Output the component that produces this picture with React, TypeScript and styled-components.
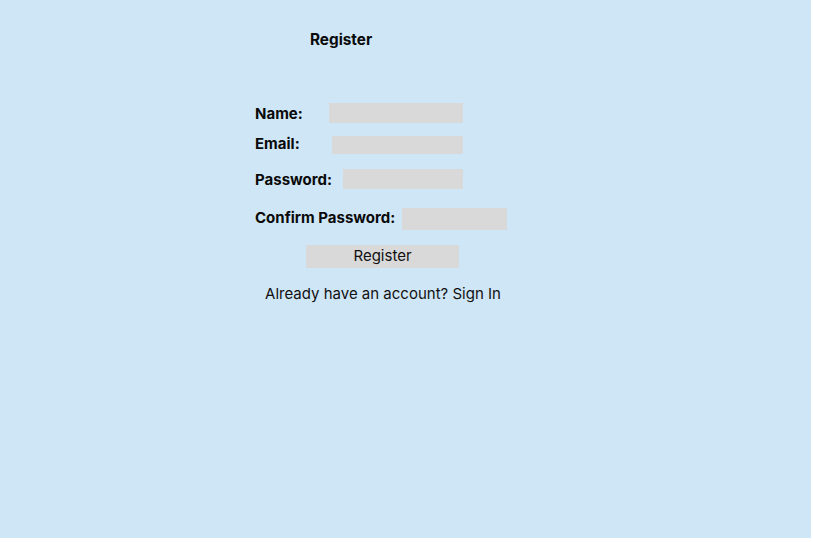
import React from "react";
import styled, { createGlobalStyle } from "styled-components";

const Global = createGlobalStyle`
  html, body { margin: 0; padding: 0; background: #ffffff; }
  body { font-family: Inter, "Noto Sans", sans-serif; color: #111; }
`;

const Panel = styled.div`
  width: 811px;
  height: 538px;
  background: #cfe6f6;
  box-sizing: border-box;
  padding: 30px 0 0 255px;
  display: flex;
  flex-direction: column;
  align-items: flex-start;
`;

const Title = styled.h1`
  margin: 0 0 0 55px;
  font-size: 15.3px;
  line-height: 20px;
  font-weight: 700;
  color: #0a0a0a;
`;

const Form = styled.form`
  margin-top: 53px;
  display: flex;
  flex-direction: column;
  align-items: flex-start;
`;

const Row = styled.div<{ $h: number; $mt: number }>`
  display: flex;
  align-items: center;
  height: ${(p) => p.$h}px;
  margin-top: ${(p) => p.$mt}px;
`;

const LabelWrap = styled.div<{ $w: number; $lift: number }>`
  flex: none;
  width: ${(p) => p.$w}px;
  padding-bottom: ${(p) => p.$lift * 2}px;
`;

const Label = styled.label`
  font-size: 15px;
  font-weight: 700;
  line-height: 18px;
  color: #0a0a0a;
  white-space: nowrap;
`;

const Input = styled.div<{ $w: number }>`
  flex: none;
  width: ${(p) => p.$w}px;
  height: 100%;
  background: #d9d9d9;
`;

const Button = styled.button`
  margin: 15px 0 0 51px;
  width: 153px;
  height: 23px;
  border: none;
  background: #d9d9d9;
  font-family: Inter, "Noto Sans", sans-serif;
  font-size: 15px;
  line-height: 18px;
  color: #111;
  padding: 0 0 2px 0;
  cursor: pointer;
`;

const Footer = styled.p`
  margin: 17px 0 0 0;
  width: 256px;
  text-align: center;
  font-size: 15px;
  line-height: 18px;
  color: #111;
`;

type FieldDef = { label: string; x: number; w: number; h: number; mt: number; lift: number };

const fields: FieldDef[] = [
  { label: "Name:", x: 74, w: 134, h: 20, mt: 0, lift: 0 },
  { label: "Email:", x: 77, w: 131, h: 18, mt: 13, lift: 2 },
  { label: "Password:", x: 88, w: 120, h: 20, mt: 15, lift: 0 },
  { label: "Confirm Password:", x: 147, w: 105, h: 22, mt: 19, lift: 2 },
];

export default function App() {
  return (
    <>
      <Global />
      <Panel>
        <Title>Register</Title>
        <Form onSubmit={(e) => e.preventDefault()}>
          {fields.map((f) => (
            <Row key={f.label} $h={f.h} $mt={f.mt}>
              <LabelWrap $w={f.x} $lift={f.lift}>
                <Label>{f.label}</Label>
              </LabelWrap>
              <Input $w={f.w} />
            </Row>
          ))}
          <Button type="submit">Register</Button>
          <Footer>Already have an account? Sign In</Footer>
        </Form>
      </Panel>
    </>
  );
}
